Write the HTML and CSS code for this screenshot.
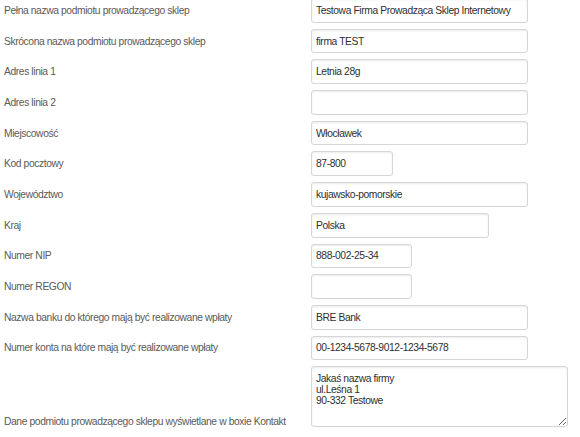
FILE: index.html
```html
<!DOCTYPE html>
<html lang="pl">
<head>
<meta charset="utf-8">
<link rel="stylesheet" href="styles.css">
</head>
<body>
<form class="form">
  <label class="lbl">Pełna nazwa podmiotu prowadzącego sklep</label>
  <input class="inp w-full" value="Testowa Firma Prowadząca Sklep Internetowy">
  <label class="lbl">Skrócona nazwa podmiotu prowadzącego sklep</label>
  <input class="inp w-full" value="firma TEST">
  <label class="lbl">Adres linia 1</label>
  <input class="inp w-full" value="Letnia 28g">
  <label class="lbl">Adres linia 2</label>
  <input class="inp w-full" value="">
  <label class="lbl">Miejscowość</label>
  <input class="inp w-full" value="Włocławek">
  <label class="lbl">Kod pocztowy</label>
  <input class="inp w-zip" value="87-800">
  <label class="lbl">Województwo</label>
  <input class="inp w-full" value="kujawsko-pomorskie">
  <label class="lbl">Kraj</label>
  <input class="inp w-mid" value="Polska">
  <label class="lbl">Numer NIP</label>
  <input class="inp w-nip" value="888-002-25-34">
  <label class="lbl">Numer REGON</label>
  <input class="inp w-nip" value="">
  <label class="lbl">Nazwa banku do którego mają być realizowane wpłaty</label>
  <input class="inp w-full" value="BRE Bank">
  <label class="lbl">Numer konta na które mają być realizowane wpłaty</label>
  <input class="inp w-full" value="00-1234-5678-9012-1234-5678">
  <label class="lbl lbl-bottom">Dane podmiotu prowadzącego sklepu wyświetlane w boxie Kontakt</label>
  <textarea class="inp area">Jakaś nazwa firmy
ul.Leśna 1
90-332 Testowe</textarea>
</form>
</body>
</html>
```
FILE: styles.css
```css
html, body {
  margin: 0;
  padding: 0;
  background: #fff;
}
body {
  font-family: "Liberation Sans", Arial, sans-serif;
  font-size: 10px;
}
.form {
  display: grid;
  grid-template-columns: 307px auto;
  grid-template-rows: repeat(12, 24.7px) 60.5px;
  row-gap: 6px;
  margin: -2px 0 0 4px;
  justify-items: start;
  align-items: center;
}
.lbl {
  color: #5a5a5a;
  font-size: 10.3px;
  letter-spacing: -0.4px;
  white-space: nowrap;
}
.lbl-bottom {
  align-self: end;
  line-height: 12px;
  margin-bottom: -1px;
}
.inp {
  box-sizing: border-box;
  height: 24.7px;
  margin: 0;
  padding: 0 4px;
  border: 1px solid #d6d6d6;
  border-radius: 3px;
  background: #fff;
  box-shadow: inset 0 1px 2px rgba(0,0,0,0.08);
  color: #2f2f2f;
  font-family: "Liberation Sans", Arial, sans-serif;
  font-size: 10.3px;
  letter-spacing: -0.4px;
  outline: none;
}
.w-full { width: 217px; }
.w-zip { width: 82px; }
.w-mid { width: 178px; }
.w-nip { width: 101px; }
.form .area {
  width: 257px;
  height: 60.5px;
  padding: 7px 4px 0;
  line-height: 10.7px;
  resize: both;
  align-self: start;
}
```
